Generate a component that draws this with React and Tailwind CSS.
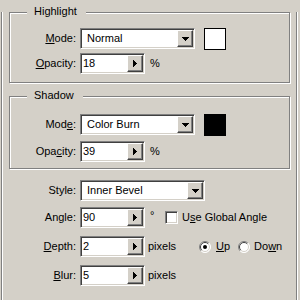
import React from "react";

const sunken =
  "border border-t-[#808080] border-l-[#808080] border-b-white border-r-white shadow-[inset_1px_1px_0_#404040,inset_-1px_-1px_0_#d4d0c8] bg-white";
const raised =
  "border border-t-white border-l-white border-b-[#404040] border-r-[#404040] shadow-[inset_-1px_-1px_0_#808080] bg-[#d4d0c8]";

function DownArrow() {
  return (
    <svg width="7" height="4" viewBox="0 0 7 4" shapeRendering="crispEdges">
      <path d="M0 0h7v1h-1v1h-1v1h-1v1h-1v-1h-1v-1h-1v-1h-1z" fill="#000" />
    </svg>
  );
}

function RightArrow() {
  return (
    <svg width="4" height="7" viewBox="0 0 4 7" shapeRendering="crispEdges">
      <path d="M0 0h1v1h1v1h1v1h1v1h-1v1h-1v1h-1v1h-1z" fill="#000" />
    </svg>
  );
}

function Select({ value, width }) {
  return (
    <div className={`${sunken} ${width} h-[21px] p-[1px] flex shrink-0`}>
      <div className="flex-1 pl-[5px] leading-[17px] whitespace-nowrap">{value}</div>
      <div className={`${raised} w-[16px] flex items-center justify-center`}>
        <DownArrow />
      </div>
    </div>
  );
}

function Spin({ value }) {
  return (
    <div className={`${sunken} w-[65px] h-[21px] p-[1px] flex shrink-0`}>
      <div className="flex-1 pl-[1px] leading-[17px]">{value}</div>
      <div className={`${raised} w-[16px] flex items-center justify-center`}>
        <RightArrow />
      </div>
    </div>
  );
}

function Label({ children, width }) {
  return (
    <div className={`${width} shrink-0 text-right pr-[4px] whitespace-nowrap`}>
      {children}
    </div>
  );
}

function Radio({ checked }) {
  return (
    <svg width="12" height="12" viewBox="0 0 12 12" className="shrink-0">
      <circle cx="6" cy="6" r="5.5" fill="#fff" />
      <path d="M9.9 2.1A5.5 5.5 0 0 0 2.1 9.9" stroke="#808080" fill="none" />
      <path d="M9.9 2.1A5.5 5.5 0 0 1 2.1 9.9" stroke="#fff" fill="none" />
      <path d="M9.2 2.8A4.5 4.5 0 0 0 2.8 9.2" stroke="#404040" fill="none" />
      <path d="M9.2 2.8A4.5 4.5 0 0 1 2.8 9.2" stroke="#d4d0c8" fill="none" />
      {checked && <circle cx="6" cy="6" r="2" fill="#000" />}
    </svg>
  );
}

function Group({ title, className, children }) {
  return (
    <div
      className={`relative ml-[7px] w-[281px] border border-[#808080] shadow-[inset_1px_1px_0_#fff,1px_1px_0_#fff] ${className}`}
    >
      <div className="absolute -top-[8px] left-[17px] bg-[#d4d0c8] pl-[7px] pr-[9px] leading-[13px]">
        {title}
      </div>
      {children}
    </div>
  );
}

export default function App() {
  return (
    <div className="w-[300px] h-[300px] overflow-hidden bg-[#d4d0c8] font-['Liberation_Sans',Arial,sans-serif] text-[11px] text-black leading-[13px]">
      <div className="ml-[1px] w-[296px] h-[300px] border-x border-[#808080] shadow-[inset_1px_0_0_#fff,1px_0_0_#fff]">
        {/* Highlight */}
        <Group title="Highlight" className="mt-[12px]">
          <div className="pt-[15px] pb-[8px] flex flex-col gap-[4px]">
            <div className="flex items-center h-[21px]">
              <Label width="w-[70px]">
                <u>M</u>ode:
              </Label>
              <Select value="Normal" width="w-[115px]" />
              <div className="ml-[9px] w-[22px] h-[22px] border border-black bg-white shrink-0" />
            </div>
            <div className="flex items-center h-[21px]">
              <Label width="w-[70px]">
                <u>O</u>pacity:
              </Label>
              <Spin value="18" />
              <span className="ml-[5px]">%</span>
            </div>
          </div>
        </Group>

        {/* Shadow */}
        <Group title="Shadow" className="mt-[13px]">
          <div className="pt-[17px] pb-[6px] flex flex-col gap-[6px]">
            <div className="flex items-center h-[21px]">
              <Label width="w-[70px]">
                Mod<u>e</u>:
              </Label>
              <Select value="Color Burn" width="w-[115px]" />
              <div className="ml-[9px] w-[22px] h-[22px] bg-black shrink-0" />
            </div>
            <div className="flex items-center h-[21px]">
              <Label width="w-[70px]">
                Opa<u>c</u>ity:
              </Label>
              <Spin value="39" />
              <span className="ml-[5px]">%</span>
            </div>
          </div>
        </Group>

        {/* Bevel settings */}
        <div className="mt-[11px] flex flex-col">
          <div className="flex items-center h-[21px]">
            <Label width="w-[78px]">Style:</Label>
            <Select value="Inner Bevel" width="w-[125px]" />
          </div>
          <div className="mt-[6px] flex items-center h-[21px]">
            <Label width="w-[78px]">Angle:</Label>
            <Spin value="90" />
            <span className="w-[20px] pl-[5px] self-start pt-[2px]">°</span>
            <div className={`${sunken} w-[13px] h-[13px] shrink-0`} />
            <span className="ml-[4px] whitespace-nowrap">
              U<u>s</u>e Global Angle
            </span>
          </div>
          <div className="mt-[8px] flex items-center h-[21px]">
            <Label width="w-[78px]">
              <u>D</u>epth:
            </Label>
            <Spin value="2" />
            <span className="w-[54px] pl-[3px]">pixels</span>
            <Radio checked />
            <span className="ml-[5px]">
              <u>U</u>p
            </span>
            <span className="ml-[8px] flex items-center">
              <Radio />
            </span>
            <span className="ml-[4px]">
              Do<u>w</u>n
            </span>
          </div>
          <div className="mt-[8px] flex items-center h-[21px]">
            <Label width="w-[78px]">
              <u>B</u>lur:
            </Label>
            <Spin value="5" />
            <span className="ml-[3px]">pixels</span>
          </div>
        </div>
      </div>
    </div>
  );
}
